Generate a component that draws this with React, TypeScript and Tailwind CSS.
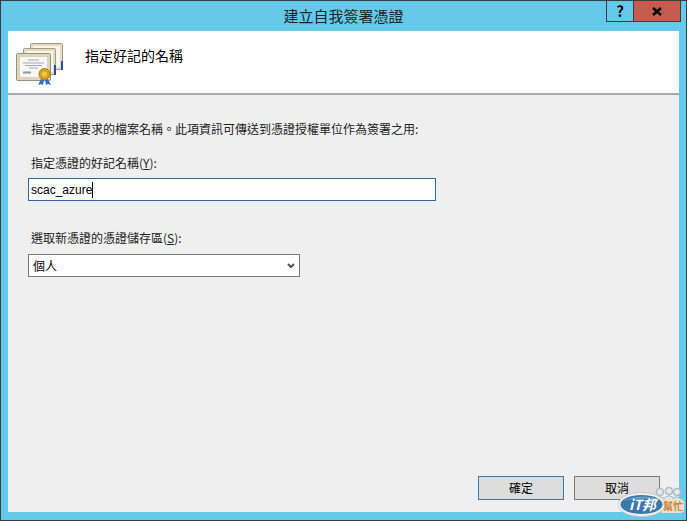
import React from 'react';

const font = { fontFamily: '"Noto Sans CJK TC", "Liberation Sans", sans-serif' };

const CertIcon: React.FC = () => (
  <svg width="48" height="42" viewBox="0 0 48 42">
    <rect x="14.500" y="0.500" width="32" height="26" rx="1" fill="#e4dbc6" stroke="#a89a7e" />
    <rect x="17" y="3" width="27" height="21" fill="#f7f5ef" />
    <rect x="45" y="18" width="2" height="9" fill="#27509a" />
    <rect x="7.500" y="5.500" width="32" height="26" rx="1" fill="#e4dbc6" stroke="#a89a7e" />
    <rect x="10" y="8" width="27" height="21" fill="#f7f5ef" />
    <rect x="38" y="22" width="2" height="10" fill="#27509a" />
    <rect x="0.500" y="10.500" width="34" height="27" rx="1" fill="#dfd5bd" stroke="#9c8f74" />
    <rect x="3.500" y="13.500" width="28" height="21" fill="#f8f7f3" stroke="#c6bda8" strokeWidth="0.500" />
    <path d="M12 17h11M7 20h21M9 22.500h17M13 25h9" stroke="#a4a9ba" strokeWidth="1" />
    <path d="M7 29.500h8" stroke="#8f96a8" strokeWidth="2" />
    <path d="M25 36l-3 6 3-1 2 1 1-5zM32 36l3 6-3-1-2 1-1-5z" fill="#2f6fd0" />
    <circle cx="28.500" cy="31" r="5.500" fill="#d7a51c" stroke="#a87a10" />
    <circle cx="28.500" cy="31" r="2.500" fill="#edc84c" />
  </svg>
);

const Watermark: React.FC = () => (
  <div className="absolute left-[617px] top-[485px] h-[31px] w-[66px]">
    <svg width="66" height="31" viewBox="0 0 66 31" className="absolute inset-0">
      <circle cx="42" cy="6" r="3.500" fill="#e8e8e8" stroke="#a9bccb" strokeWidth="1.500" />
      <circle cx="51" cy="5" r="3.500" fill="#e8e8e8" stroke="#a9bccb" strokeWidth="1.500" />
      <circle cx="59" cy="6" r="3.500" fill="#e8e8e8" stroke="#a9bccb" strokeWidth="1.500" />
      <path d="M37 14c1-4 9-4 10 0M46 13c1-4 9-4 10 0M54 14c1-4 8-4 9 0" fill="#dfe6ec" stroke="#a9bccb" />
      <rect x="41" y="13" width="25" height="14" rx="4" fill="#f2dfc4" />
      <ellipse cx="23.500" cy="18.500" rx="23.500" ry="12" fill="#f1f1f1" stroke="#c9c9c9" />
      <ellipse cx="23.500" cy="18.500" rx="21" ry="9.500" fill="#3a78aa" />
      <path d="M5 15c8-5 29-6 37-1-12-2-25-2-37 1z" fill="#6ea4cc" />
    </svg>
    <span className="absolute left-[11px] top-[9px] text-[14px] leading-[18px] font-bold italic text-white">iT邦</span>
    <span className="absolute left-[45px] top-[14px] text-[10px] leading-[12px] font-bold text-[#c9863b]">幫忙</span>
  </div>
);

const App: React.FC = () => {
  return (
    <div className="relative w-[687px] h-[521px] flex flex-col bg-[#65c9eb] border-t border-l border-r border-[#3d3d3d] text-[12px] leading-[16px] text-black overflow-hidden" style={font}>
      <div className="h-[30px] shrink-0 flex relative">
        <div className="flex-1 text-center text-[15px] leading-[29px] text-[#222]">建立自我簽署憑證</div>
        <div className="absolute right-[5px] top-0 flex h-[21px] border border-t-0 border-[#3d3d3d]">
          <div className="w-[27px] flex items-center justify-center text-[15px] font-bold border-r border-[#3d3d3d]">?</div>
          <div className="w-[46px] bg-[#c75b50] flex items-center justify-center">
            <svg width="10" height="9" viewBox="0 0 10 9"><path d="M1 1l8 7M9 1l-8 7" stroke="#000" strokeWidth="2.400" /></svg>
          </div>
        </div>
      </div>

      <div className="mx-[7px] h-[481px] bg-[#efefef] flex flex-col relative">
        <div className="h-[64px] shrink-0 bg-white border-b-2 border-[#a8a8a8] flex items-start pl-[8px] pt-[12px]">
          <CertIcon />
          <div className="ml-[21px] mt-[3px] text-[14px] leading-[18px]">指定好記的名稱</div>
        </div>

        <div className="flex-1 flex flex-col pl-[20px] pt-[26px]">
          <div className="pl-[3px] text-[#222]">指定憑證要求的檔案名稱。此項資訊可傳送到憑證授權單位作為簽署之用:</div>
          <label className="pl-[3px] mt-[18px] text-[#222]">指定憑證的好記名稱(<u>Y</u>):</label>
          <div className="mt-[7px] w-[408px] h-[23px] bg-white border border-[#2a6aa0] flex items-center pl-[2px] text-[12px]" style={{ fontFamily: '"Liberation Sans", sans-serif' }}>
            scac_azure<span className="w-px h-[16px] bg-black" />
          </div>
          <label className="pl-[3px] mt-[29px] text-[#222]">選取新憑證的憑證儲存區(<u>S</u>):</label>
          <div className="mt-[8px] w-[272px] h-[23px] bg-white border border-[#7a7a7a] flex items-center justify-between pl-[4px] pr-[4px]">
            <span>個人</span>
            <svg width="8" height="6" viewBox="0 0 8 6"><path d="M1 1l3 3 3-3" fill="none" stroke="#555" strokeWidth="2" /></svg>
          </div>

          <div className="mt-auto mb-[12px] flex justify-end gap-[10px] pr-[19px]">
            <button className="w-[86px] h-[24px] bg-[#dddddd] border border-[#3b78ab] text-[12px]">確定</button>
            <button className="w-[86px] h-[24px] bg-[#dddddd] border border-[#7a7a7a] text-[12px]">取消</button>
          </div>
        </div>
      </div>
      <div className="h-px mt-auto bg-[#3d3d3d]" />
      <Watermark />
    </div>
  );
};

export default App;
